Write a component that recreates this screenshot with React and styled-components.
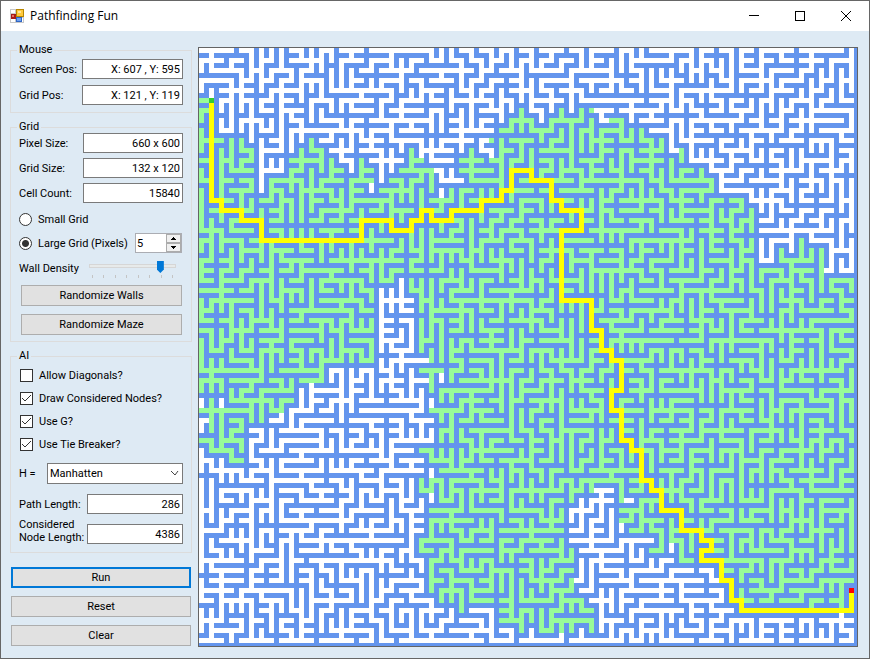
import React, { useMemo } from "react";
import styled, { createGlobalStyle, css } from "styled-components";

const GlobalStyle = createGlobalStyle`
  * { box-sizing: border-box; }
  body {
    margin: 0;
    font-family: Roboto, "Liberation Sans", Arial, sans-serif;
    font-size: 11px;
    line-height: 13px;
    color: #000;
  }
  input, button, select { font: inherit; color: inherit; margin: 0; }
`;

/* ---------- window ---------- */

const Window = styled.div`
  display: flex;
  flex-direction: column;
  min-height: 100vh;
  border: 1px solid #666;
  background: #deeaf4;
`;

const TitleBar = styled.header`
  display: flex;
  align-items: center;
  height: 30px;
  padding-left: 9px;
  background: #fff;
`;

const Title = styled.h1`
  flex: 1;
  margin: 0 0 0 5px;
  font: 12px/16px "Open Sans", "Noto Sans", sans-serif;
`;

const CaptionButton = styled.button`
  display: grid;
  place-items: center;
  width: 46px;
  height: 30px;
  padding: 0;
  border: 0;
  background: transparent;
`;

const Body = styled.div`
  display: flex;
  flex: 1;
  gap: 6px;
  padding: 13px 11px 11px 9px;
`;

const Sidebar = styled.aside`
  display: flex;
  flex-direction: column;
  gap: 8px;
  flex: 0 0 182px;
`;

const Canvas = styled.main`
  flex: 1;
  min-width: 0;
  margin-top: 3px;
  border: 1px solid #646464;
  background: #fff;
  svg { display: block; width: 100%; height: 100%; }
`;

/* ---------- form parts ---------- */

const Group = styled.fieldset`
  min-width: 0;
  margin: 0;
  padding: ${(p) => p.$pad};
  border: 1px solid #dcdcdc;
`;

const Legend = styled.legend`
  margin-left: -2px;
  padding: 0 2px;
  line-height: 12px;
`;

const Stack = styled.div`
  display: flex;
  flex-direction: column;
  gap: ${(p) => p.$gap}px;
  margin-top: ${(p) => p.$top || 0}px;
`;

const FieldRow = styled.div`
  display: grid;
  grid-template-columns: ${(p) => p.$label}px 1fr;
  align-items: ${(p) => p.$align || "center"};
`;

const FieldLabel = styled.label`
  white-space: nowrap;
`;

const TextBox = styled.input`
  width: 100%;
  min-width: 0;
  height: 20px;
  padding: 0 2px;
  border: 1px solid #7a7a7a;
  border-radius: 0;
  background: #fff;
  text-align: right;
`;

const OptionRow = styled.div`
  display: flex;
  align-items: center;
  height: ${(p) => p.$height}px;
`;

const OptionLabel = styled.label`
  display: flex;
  align-items: center;
  gap: 6px;
  flex: 1;
  white-space: nowrap;
`;

const Radio = styled.input`
  appearance: none;
  width: 13px;
  height: 13px;
  border: 1px solid #333;
  border-radius: 50%;
  background: #fff;
  &:checked { background: radial-gradient(circle, #333 0 3px, #fff 4px); }
`;

const TickHolder = styled.span`
  position: relative;
  display: flex;
  margin-left: 1px;
  svg { position: absolute; inset: 0; pointer-events: none; }
  input:not(:checked) + svg { display: none; }
`;

const CheckBox = styled.input`
  appearance: none;
  width: 13px;
  height: 13px;
  border: 1px solid #333;
  background: #fff;
`;

const Spinner = styled.div`
  display: flex;
  width: 47px;
  height: 20px;
  margin-right: 1px;
  border: 1px solid #abadb3;
  background: #fff;
`;

const SpinnerInput = styled.input`
  appearance: textfield;
  flex: 1;
  min-width: 0;
  padding: 0 1px;
  border: 0;
  background: transparent;
  &::-webkit-inner-spin-button { appearance: none; }
`;

const SpinnerButtons = styled.div`
  display: grid;
  grid-template-rows: 1fr 1fr;
  width: 15px;
`;

const StepButton = styled.button`
  display: grid;
  place-items: center;
  padding: 0;
  border: 1px solid #acacac;
  background: #f0f0f0;
`;

const SliderRow = styled.div`
  display: grid;
  grid-template-columns: 70px 1fr;
  align-items: center;
  padding-right: 7px;
`;

const SliderBox = styled.div`
  display: flex;
  flex-direction: column;
  gap: 2px;
`;

const Slider = styled.input`
  appearance: none;
  width: 100%;
  height: 14px;
  background: transparent;
  &::-webkit-slider-runnable-track {
    height: 4px;
    border: 1px solid #d6d6d6;
    background: #e7eaea;
  }
  &::-webkit-slider-thumb {
    appearance: none;
    width: 7px;
    height: 12px;
    margin-top: -4px;
    background: #0078d7;
    clip-path: polygon(0 0, 100% 0, 100% 70%, 50% 100%, 0 70%);
  }
`;

const Ticks = styled.div`
  display: flex;
  justify-content: space-between;
  padding: 0 3px;
`;

const Tick = styled.span`
  width: 1px;
  height: 3px;
  background: #c4c4c4;
`;

const PushButton = styled.button`
  width: 100%;
  height: 21px;
  padding: 0;
  border: 1px solid #adadad;
  background: #e1e1e1;
  line-height: 13px;
  ${(p) => p.$primary && css`border: 2px solid #0078d7;`}
`;

const GroupButtons = styled(Stack)`
  padding: 0 1px 0 2px;
`;

const Actions = styled(Stack)`
  padding: 0 1px;
`;

const SelectHolder = styled.div`
  position: relative;
  svg { position: absolute; right: 4px; top: 7px; pointer-events: none; }
`;

const Select = styled.select`
  appearance: none;
  display: block;
  width: 100%;
  height: 21px;
  padding: 0 2px;
  border: 1px solid #7a7a7a;
  border-radius: 0;
  background: #fff;
`;

/* ---------- maze ---------- */

const CELL = 5;
const COLS = 132;
const ROWS = 120;

// Corners of the solved route, as [column, row].
const ROUTE = [
  [2, 10], [2, 30], [4, 30], [4, 32], [8, 32], [8, 34], [12, 34], [12, 38],
  [32, 38], [32, 34], [38, 34], [38, 36], [42, 36], [42, 34], [44, 34],
  [44, 32], [46, 32], [46, 34], [50, 34], [50, 32], [56, 32], [56, 30],
  [60, 30], [60, 28], [62, 28], [62, 24], [66, 24], [66, 26], [70, 26],
  [70, 30], [72, 30], [72, 32], [76, 32], [76, 36], [72, 36], [72, 50],
  [78, 50], [78, 56], [80, 56], [80, 60], [82, 60], [82, 62], [84, 62],
  [84, 68], [82, 68], [82, 72], [84, 72], [84, 78], [86, 78], [86, 80],
  [88, 80], [88, 86], [90, 86], [90, 88], [92, 88], [92, 92], [96, 92],
  [96, 96], [100, 96], [100, 98], [102, 98], [102, 100], [100, 100],
  [100, 102], [104, 102], [104, 106], [106, 106], [106, 110], [108, 110],
  [108, 112], [130, 112], [130, 108],
];

// Column spans of considered nodes for every second row, from row 10 down.
const CONSIDERED = [
  "0-2", "0-2,64-64,72-72,76-76,78-78", "0-2,62-66,70-78,82-84",
  "0-2,60-68,70-76,78-88", "0-8,21-22,58-88,90-90,92-92",
  "0-10,20-24,42-42,54-54,60-92,96-96", "0-10,18-26,32-32,42-44,52-96",
  "0-10,17-28,32-34,39-46,52-100", "0-10,14-35,37-46,53-102",
  "0-10,14-33,35-46,50-102", "0-108", "0-110", "0-110", "0-110",
  "0-110,120-120", "0-110,116-116,120-124", "0-110,115-125", "0-125",
  "0-39,41-130", "0-35,41-130", "0-35,43-130", "0-35,43-130", "0-35,43-130",
  "0-35,44-130", "0-35,43-130", "0-35,44-130", "0-35,45-130", "0-25,44-130",
  "0-25,46-46,49-130", "0-19,46-130", "2-2,5-19,47-130", "0-16,46-130",
  "1-13,48-130", "1-9,47-130", "0-8,48-130", "1-9,44-130",
  "6-6,8-8,46-130", "48-130", "44-130", "44-79,83-130",
  "48-75,83-85,87-130", "46-73,83-130", "46-73,83-130",
  "46-73,86-130", "44-73,91-130", "44-75,90-93,95-130", "46-75,96-130",
  "46-75,104-130", "46-75,104-130", "46-75,106-130", "48-77,106-130",
  "52-52,60-78,108-130", "60-60,62-78", "64-64,68-74,78-78",
].map((line) => line.split(",").map((s) => s.split("-").map(Number)));

const isConsidered = (c, r) => {
  const spans = CONSIDERED[(r - 10) / 2];
  return Boolean(spans && spans.some(([a, b]) => c >= a && c <= b));
};

function randomSource(seed) {
  let s = seed;
  return () => {
    s = (s + 0x6d2b79f5) | 0;
    let t = Math.imul(s ^ (s >>> 15), 1 | s);
    t = (t + Math.imul(t ^ (t >>> 7), 61 | t)) ^ t;
    return ((t ^ (t >>> 14)) >>> 0) / 4294967296;
  };
}

// Spanning-tree maze (Kruskal) whose first joined rooms are those on the route.
function buildMaze() {
  const w = COLS / 2;
  const h = ROWS / 2;
  const parent = Array.from({ length: w * h }, (_, i) => i);
  const find = (i) => {
    while (parent[i] !== i) {
      parent[i] = parent[parent[i]];
      i = parent[i];
    }
    return i;
  };
  const open = [];
  const considered = [];
  const join = (x1, y1, x2, y2) => {
    const a = find(y1 * w + x1);
    const b = find(y2 * w + x2);
    if (a === b) return;
    parent[a] = b;
    const seen = isConsidered(x1 * 2, y1 * 2) && isConsidered(x2 * 2, y2 * 2);
    (seen ? considered : open).push([x1 + x2, y1 + y2]);
  };

  for (let i = 1; i < ROUTE.length; i++) {
    let [x, y] = ROUTE[i - 1].map((v) => v / 2);
    const [tx, ty] = ROUTE[i].map((v) => v / 2);
    while (x !== tx || y !== ty) {
      const nx = x + Math.sign(tx - x);
      const ny = y + Math.sign(ty - y);
      join(x, y, nx, ny);
      x = nx;
      y = ny;
    }
  }

  const random = randomSource(1968);
  const edges = [];
  for (let y = 0; y < h; y++) {
    for (let x = 0; x < w; x++) {
      const here = isConsidered(x * 2, y * 2);
      (here ? considered : open).push([x * 2, y * 2]);
      const add = (nx, ny) => {
        const crossing = here !== isConsidered(nx * 2, ny * 2);
        edges.push([random() + (crossing ? 0.6 : 0), x, y, nx, ny]);
      };
      if (x + 1 < w) add(x + 1, y);
      if (y + 1 < h) add(x, y + 1);
    }
  }
  edges.sort((a, b) => a[0] - b[0]);
  edges.forEach(([, x1, y1, x2, y2]) => join(x1, y1, x2, y2));
  return { open, considered };
}

const cellsPath = (cells) =>
  cells.map(([c, r]) => `M${c * CELL} ${r * CELL}h${CELL}v${CELL}h-${CELL}z`).join("");

function Maze() {
  const { open, considered } = useMemo(() => {
    const maze = buildMaze();
    return { open: cellsPath(maze.open), considered: cellsPath(maze.considered) };
  }, []);
  const mid = (v) => v * CELL + CELL / 2;
  const points = ROUTE.map(([c, r]) => `${mid(c)},${mid(r)}`).join(" ");
  const [start, end] = [ROUTE[0], ROUTE[ROUTE.length - 1]];
  return (
    <svg
      viewBox="0 0 658 598"
      preserveAspectRatio="xMinYMin slice"
      shapeRendering="crispEdges"
      role="img"
      aria-label="Maze with solved path"
    >
      <rect width="660" height="600" fill="#6495ed" />
      <path d={open} fill="#fff" />
      <path d={considered} fill="#98fb98" />
      <polyline points={points} fill="none" stroke="#ff0" strokeWidth={CELL} strokeLinecap="square" />
      <rect x={start[0] * CELL} y={start[1] * CELL} width={CELL} height={CELL} fill="#32cd32" />
      <rect x={end[0] * CELL} y={end[1] * CELL} width={CELL} height={CELL} fill="#f00" />
    </svg>
  );
}

/* ---------- icons ---------- */

const AppIcon = () => (
  <svg width="15" height="15" viewBox="0 0 15 15" shapeRendering="crispEdges" aria-hidden="true">
    <rect x="0" y="0" width="14" height="14" fill="#c8c8c8" />
    <rect x="1" y="1" width="4" height="3" fill="#fff" />
    <rect x="1" y="10" width="4" height="3" fill="#fff" />
    <rect x="12" y="9" width="1" height="4" fill="#fff" />
    <rect x="1" y="5" width="5" height="5" fill="#a81818" />
    <rect x="2" y="6" width="2" height="2" fill="#e87060" />
    <rect x="6" y="0" width="8" height="8" fill="#b88600" />
    <rect x="7" y="1" width="6" height="6" fill="#ffc93c" />
    <rect x="8" y="2" width="3" height="2" fill="#ffe69a" />
    <rect x="6" y="8" width="6" height="5" fill="#2f66c4" />
    <rect x="7" y="9" width="4" height="3" fill="#6fa0f0" />
  </svg>
);

const MinimizeIcon = () => (
  <svg width="10" height="10" shapeRendering="crispEdges"><path d="M0 4h10v1H0z" /></svg>
);
const MaximizeIcon = () => (
  <svg width="10" height="10" shapeRendering="crispEdges">
    <path d="M0 0h10v10H0zM1 1v8h8V1z" fillRule="evenodd" />
  </svg>
);
const CloseIcon = () => (
  <svg width="10" height="10"><path d="M0 0L10 10M10 0L0 10" stroke="#000" /></svg>
);
const TickIcon = () => (
  <svg width="13" height="13"><path d="M2 6L5 9L11 3" fill="none" stroke="#333" /></svg>
);
const ChevronIcon = () => (
  <svg width="9" height="7"><path d="M1 1L5 5L8 1" fill="none" stroke="#444" /></svg>
);
const ArrowIcon = ({ down }) => (
  <svg width="5" height="3" shapeRendering="crispEdges">
    <path d={down ? "M0 0h5v1H4v1H3v1H2V2H1V1H0z" : "M2 0h1v1h1v1h1v1H0V2h1V1h1z"} />
  </svg>
);

/* ---------- composed controls ---------- */

function Field({ id, label, value, labelWidth, align }) {
  return (
    <FieldRow $label={labelWidth} $align={align}>
      <FieldLabel htmlFor={id}>{label}</FieldLabel>
      <TextBox id={id} type="text" readOnly value={value} />
    </FieldRow>
  );
}

function Check({ label, checked }) {
  return (
    <OptionRow $height={15}>
      <OptionLabel>
        <TickHolder>
          <CheckBox type="checkbox" defaultChecked={checked} />
          <TickIcon />
        </TickHolder>
        {label}
      </OptionLabel>
    </OptionRow>
  );
}

export default function App() {
  return (
    <>
      <GlobalStyle />
      <Window>
        <TitleBar>
          <AppIcon />
          <Title>Pathfinding Fun</Title>
          <CaptionButton aria-label="Minimize"><MinimizeIcon /></CaptionButton>
          <CaptionButton aria-label="Maximize"><MaximizeIcon /></CaptionButton>
          <CaptionButton aria-label="Close"><CloseIcon /></CaptionButton>
        </TitleBar>
        <Body>
          <Sidebar>
            <Group $pad="3px 8px 7px">
              <Legend>Mouse</Legend>
              <Stack $gap={6}>
                <Field id="screen-pos" label="Screen Pos:" value="X: 607 , Y: 595" labelWidth={63} />
                <Field id="grid-pos" label="Grid Pos:" value="X: 121 , Y: 119" labelWidth={63} />
              </Stack>
            </Group>

            <Group $pad="0 8px 6px">
              <Legend>Grid</Legend>
              <Stack $gap={5}>
                <Field id="pixel-size" label="Pixel Size:" value="660 x 600" labelWidth={64} />
                <Field id="grid-size" label="Grid Size:" value="132 x 120" labelWidth={64} />
                <Field id="cell-count" label="Cell Count:" value="15840" labelWidth={64} />
              </Stack>
              <Stack $gap={6} $top={8}>
                <OptionRow $height={16}>
                  <OptionLabel>
                    <Radio type="radio" name="grid-kind" />
                    Small Grid
                  </OptionLabel>
                </OptionRow>
                <OptionRow $height={20}>
                  <OptionLabel>
                    <Radio type="radio" name="grid-kind" defaultChecked />
                    Large Grid (Pixels)
                  </OptionLabel>
                  <Spinner>
                    <SpinnerInput type="number" aria-label="Large grid pixels" defaultValue={5} />
                    <SpinnerButtons>
                      <StepButton aria-label="Increase"><ArrowIcon /></StepButton>
                      <StepButton aria-label="Decrease"><ArrowIcon down /></StepButton>
                    </SpinnerButtons>
                  </Spinner>
                </OptionRow>
                <SliderRow>
                  <FieldLabel htmlFor="wall-density">Wall Density</FieldLabel>
                  <SliderBox>
                    <Slider id="wall-density" type="range" min="0" max="7" defaultValue="6" />
                    <Ticks>
                      {Array.from({ length: 8 }, (_, i) => <Tick key={i} />)}
                    </Ticks>
                  </SliderBox>
                </SliderRow>
                <GroupButtons $gap={8} $top={1}>
                  <PushButton>Randomize Walls</PushButton>
                  <PushButton>Randomize Maze</PushButton>
                </GroupButtons>
              </Stack>
            </Group>

            <Group $pad="6px 8px 8px">
              <Legend>AI</Legend>
              <Stack $gap={8}>
                <Check label="Allow Diagonals?" />
                <Check label="Draw Considered Nodes?" checked />
                <Check label="Use G?" checked />
                <Check label="Use Tie Breaker?" checked />
              </Stack>
              <Stack $gap={10} $top={11}>
                <FieldRow $label={28}>
                  <FieldLabel htmlFor="heuristic">H =</FieldLabel>
                  <SelectHolder>
                    <Select id="heuristic" defaultValue="Manhatten">
                      <option>Manhatten</option>
                    </Select>
                    <ChevronIcon />
                  </SelectHolder>
                </FieldRow>
                <Stack $gap={4}>
                  <Field id="path-length" label="Path Length:" value="286" labelWidth={68} />
                  <Field
                    id="considered-length"
                    label={<>Considered<br />Node Length:</>}
                    value="4386"
                    labelWidth={68}
                    align="end"
                  />
                </Stack>
              </Stack>
            </Group>

            <Actions $gap={8} $top={6}>
              <PushButton $primary>Run</PushButton>
              <PushButton>Reset</PushButton>
              <PushButton>Clear</PushButton>
            </Actions>
          </Sidebar>
          <Canvas>
            <Maze />
          </Canvas>
        </Body>
      </Window>
    </>
  );
}
